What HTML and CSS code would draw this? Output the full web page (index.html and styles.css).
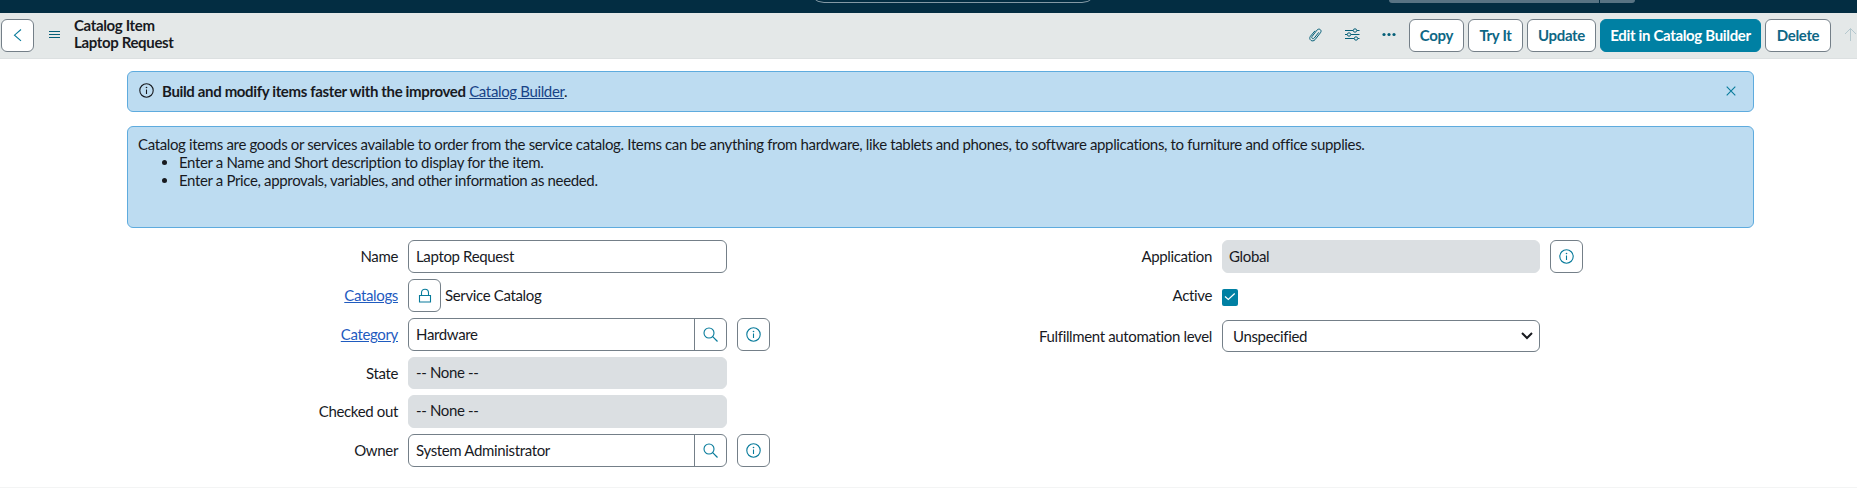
FILE: index.html
```html
<!DOCTYPE html>
<html lang="en">
<head>
<meta charset="utf-8">
<title>Laptop Request | Catalog Item</title>
<link rel="stylesheet" href="styles.css">
</head>
<body>
<svg class="defs" width="0" height="0">
  <symbol id="info" viewBox="0 0 16 16"><circle cx="7.500" cy="7.500" r="6.700" fill="none" stroke="currentColor" stroke-width="1.100"/><path d="M7.500 6.500V11" stroke="currentColor" stroke-width="1.100" fill="none"/><circle cx="7.500" cy="4.500" r=".8" fill="currentColor"/></symbol>
  <symbol id="search" viewBox="0 0 16 16"><circle cx="6" cy="6" r="5" fill="none" stroke="currentColor" stroke-width="1.100"/><path d="M9.700 9.700L14.500 14.500" stroke="currentColor" stroke-width="1.200"/></symbol>
</svg>
<div class="topbar"><div class="global-search"></div><div class="picker"><span class="picker-main"></span><span class="picker-end"></span></div></div>
<header class="header">
  <button class="btn back"><svg width="16" height="16" viewBox="0 0 16 16"><path d="M11 2.500L4.500 8.200l6.500 5.700" fill="none" stroke="currentColor" stroke-width="1.100"/></svg></button>
  <svg class="burger" width="12" height="10" viewBox="0 0 12 10"><path d="M0 1.500h11M0 4.500h11M0 7.500h11" stroke="currentColor"/></svg>
  <h1 class="title">Catalog Item<br>Laptop Request</h1>
  <div class="tools">
    <svg width="16" height="16" viewBox="0 0 16 16"><path d="M11.800 5.300L7.300 11c-1.300 1.600-3.400.1-2.200-1.600l4.900-6.300c2-2.400 5.400 0 3.500 2.600l-5.500 7c-2.500 3-6.900-.2-4.600-3.400L8 3.800" fill="none" stroke="currentColor"/></svg>
    <svg width="16" height="16" viewBox="0 0 16 16"><path d="M1 3.500h8M13 3.500h2.500M1 7.500h2M7 7.500h8.500M1 11.500h9M14 11.500h1.500" stroke="currentColor"/><g fill="none" stroke="currentColor"><circle cx="11" cy="3.500" r="1.700"/><circle cx="5" cy="7.500" r="1.700"/><circle cx="12" cy="11.500" r="1.700"/></g></svg>
    <svg width="16" height="16" viewBox="0 0 16 16"><g fill="currentColor"><circle cx="3" cy="7.500" r="1.600"/><circle cx="8" cy="7.500" r="1.600"/><circle cx="13" cy="7.500" r="1.600"/></g></svg>
  </div>
  <div class="actions">
    <button class="btn copy">Copy</button>
    <button class="btn try">Try It</button>
    <button class="btn update">Update</button>
    <button class="btn primary">Edit in Catalog Builder</button>
    <button class="btn delete">Delete</button>
  </div>
  <svg class="up" width="14" height="16" viewBox="0 0 14 16"><path d="M7.500 14V1.500M2 7l5.500-5.500L13 7" fill="none" stroke="currentColor"/></svg>
</header>
<main class="content">
  <section class="notice banner">
    <svg class="banner-icon" width="16" height="16"><use href="#info"/></svg>
    <p><b>Build and modify items faster with the improved</b> <a href="#">Catalog Builder</a>.</p>
    <svg class="close" width="10" height="10" viewBox="0 0 10 10"><path d="M.7.7l8.600 8.600M9.300.7L.7 9.300" stroke="currentColor" stroke-width="1.100"/></svg>
  </section>
  <section class="notice help">
    <p>Catalog items are goods or services available to order from the service catalog. Items can be anything from hardware, like tablets and phones, to software applications, to furniture and office supplies.</p>
    <ul><li>Enter a Name and Short description to display for the item.</li><li>Enter a Price, approvals, variables, and other information as needed.</li></ul>
  </section>
  <form class="form">
    <div class="column left">
      <div class="row"><label>Name</label><div class="field">Laptop Request</div></div>
      <div class="row"><label><a href="#">Catalogs</a></label><span class="btn square"><svg width="14" height="16" viewBox="0 0 14 16"><path d="M1.500 7.500h11v6.500h-11zM3.500 7.500V4.700a3.500 3.500 0 0 1 7 0v2.800" fill="none" stroke="currentColor" stroke-width="1.100"/></svg></span><span class="value">Service Catalog</span></div>
      <div class="row"><label><a href="#">Category</a></label><div class="field lookup"><span>Hardware</span><i><svg width="16" height="16"><use href="#search"/></svg></i></div><span class="btn square info"><svg width="16" height="16"><use href="#info"/></svg></span></div>
      <div class="row short"><label>State</label><div class="field readonly none">-- None --</div></div>
      <div class="row"><label>Checked out</label><div class="field readonly none">-- None --</div></div>
      <div class="row"><label>Owner</label><div class="field lookup"><span>System Administrator</span><i><svg width="16" height="16"><use href="#search"/></svg></i></div><span class="btn square info"><svg width="16" height="16"><use href="#info"/></svg></span></div>
    </div>
    <div class="column right">
      <div class="row"><label>Application</label><div class="field readonly">Global</div><span class="btn square info"><svg width="16" height="16"><use href="#info"/></svg></span></div>
      <div class="row"><label>Active</label><span class="check"><svg width="16" height="17" viewBox="0 0 16 17"><path d="M3 7.500l3.300 3L12.700 4.500" fill="none" stroke="currentColor" stroke-width="1.200"/></svg></span></div>
      <div class="row short level"><label>Fulfillment automation level</label><div class="field select">Unspecified<svg width="14" height="10" viewBox="0 0 14 10"><path d="M2 2l5 5 5-5" fill="none" stroke="currentColor" stroke-width="2"/></svg></div></div>
    </div>
  </form>
</main>
</body>
</html>
```
FILE: styles.css
```css
* { box-sizing: border-box; }
body { margin: 0; height: 488px; overflow: hidden; background: #fff; color: #181a1f; font: 15px/18px Lato, sans-serif; letter-spacing: -.35px; }
p, ul, h1 { margin: 0; }
svg { display: block; flex: none; }
.defs { position: absolute; }
.topbar { height: 13px; background: #032d42; display: flex; align-items: flex-start; overflow: hidden; }
.global-search { margin: -29px 0 0 808px; width: 290px; height: 32px; border: 1px solid #8499a5; border-radius: 16px; }
.picker { margin-left: 291px; display: flex; gap: 1px; height: 3px; }
.picker-main { width: 210px; background: #587383; border-radius: 0 0 0 3px; }
.picker-end { width: 35px; background: #587383; border-radius: 0 0 3px 0; }
.header { height: 46px; background: #e4e8e8; border-bottom: 1px solid #dce0e1; display: flex; align-items: flex-start; padding: 6px 0 0 1px; color: #055f78; }
.btn { height: 33px; flex: none; display: flex; align-items: center; justify-content: center; border: 1px solid #747f88; border-radius: 6px; background: #fff; color: #0e6785; font: bold 15px/18px Lato, sans-serif; letter-spacing: -.33px; padding: 0 0 1px; white-space: nowrap; }
.back { width: 33px; color: #087b9b; }
.burger { margin: 11px 0 0 15px; }
.title { margin: -2px 0 0 13px; font-size: 15px; line-height: 17px; font-weight: bold; color: #181a1f; white-space: nowrap; }
.tools { margin: 8px 0 0 auto; display: flex; gap: 21px; }
.actions { margin-left: 12px; display: flex; gap: 4px; }
.actions .btn { padding-bottom: 2px; }
.copy { width: 55px; }
.try { width: 55px; }
.update { width: 69px; }
.delete { width: 66px; }
.actions .primary { width: 161px; background: #0080a3; border-color: #0080a3; color: #fff; }
.up { margin: 8px 0 0 12px; color: #b5c8ce; }
.content { height: 429px; border-bottom: 1px solid #f3f4f4; padding: 12px 103px 0 127px; }
.notice { background: #bddcf1; border: 1px solid #5eabde; border-radius: 6px; }
.banner { height: 41px; display: flex; align-items: center; padding: 0 17px 1px 11px; }
.banner p { margin-left: 7px; padding-bottom: 1px; }
.notice a { color: #184387; }
.close { margin-left: auto; color: #087b9b; }
.help { height: 102px; margin-top: 14px; padding: 8px 10px; white-space: nowrap; }
.help ul { padding-left: 41px; }
.form { display: flex; margin-top: 12px; }
.column { display: flex; flex-direction: column; gap: 6px; flex: none; }
.left { width: 814px; }
.row { display: flex; height: 33px; align-items: center; }
.row label { width: 271px; margin-right: 10px; padding-bottom: 1px; text-align: right; flex: none; }
.row label a { color: #1f5bbf; }
.field { width: 319px; height: 33px; border: 1px solid #747f88; border-radius: 6px; background: #fff; padding: 0 7px 1px; display: flex; align-items: center; flex: none; }
.readonly { background: #dbdfe2; border-color: #dbdfe2; }
.short, .short .field { height: 32px; }
.none { padding-bottom: 3px; }
.lookup { padding: 0 0 0 7px; }
.lookup span { padding-bottom: 1px; }
.lookup i { margin-left: auto; width: 32px; height: 31px; border-left: 1px solid #747f88; display: flex; align-items: center; justify-content: center; color: #087b9b; }
.square { width: 33px; color: #087b9b; padding: 0; }
.info { margin-left: 10px; }
.value { margin-left: 4px; padding-bottom: 1px; }
.right .field { width: 318px; padding: 0 6px 1px; }
.check { width: 16px; height: 17px; margin-top: 4px; background: #0080a3; border-radius: 2px; color: #fff; }
.level { margin-top: 2px; }
.right .select { justify-content: space-between; padding: 0 5px 1px 10px; }
```
